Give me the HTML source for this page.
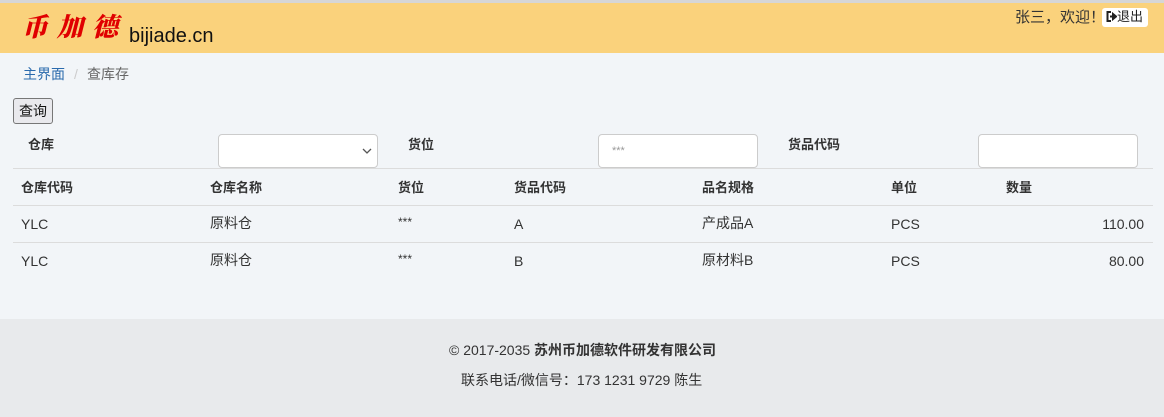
<!DOCTYPE html>
<html><head><meta charset="utf-8"><style>
*{box-sizing:border-box;margin:0;padding:0}
body{width:1164px;height:417px;overflow:hidden;background:#f2f5f8;font-family:"Liberation Sans","Noto Sans CJK SC",sans-serif;font-size:14px;color:#333;position:relative}
.abs{position:absolute;white-space:nowrap;line-height:18px}
.hdr{position:absolute;left:0;top:0;width:1164px;height:53px;background:#fad27c;border-top:3px solid #d6d6d6}
.logo{left:22px;top:10px;font-family:"Noto Serif CJK SC",serif;font-weight:900;font-size:26px;line-height:32px;color:#e00000;letter-spacing:9px;font-style:italic}
.dom{left:129px;top:24px;font-size:20px;line-height:24px;color:#111}
.b{font-weight:bold}
.line{position:absolute;left:13px;width:1140px;height:1px;background:#dcdcdc}
.inp{position:absolute;background:#fff;border:1px solid #ccc;border-radius:4px;height:34px}
.foot{position:absolute;left:0;top:319px;width:1164px;height:98px;background:#e8eaec}
.c{margin-top:0}
</style></head><body>
<div class="hdr"></div>
<div class="abs logo">币加德</div>
<div class="abs dom">bijiade.cn</div>
<div class="abs" style="left:1015px;top:9px;font-size:15px;color:#333">张三，欢迎！</div>
<div class="abs" style="left:1102px;top:8px;width:46px;height:19px;background:#fff;border-radius:3px;font-size:13px;color:#222;padding:0 0 0 4px"><svg width="11" height="11" viewBox="0 0 11 11" style="vertical-align:-1px"><path d="M5 1H1.5v9H5" fill="none" stroke="#222" stroke-width="2"/><path d="M4 5.5h4M7 3l3 2.5-3 2.5z" stroke="#222" stroke-width="2" fill="#222"/></svg>退出</div>
<div class="abs" style="left:23px;top:65px;color:#2a6aad">主界面</div>
<div class="abs" style="left:74px;top:65px;color:#ccc">/</div>
<div class="abs" style="left:87px;top:65px;color:#666">查库存</div>
<div class="abs" style="left:13px;top:98px;width:40px;height:26px;border:1px solid #777;border-radius:3px;background:#e9e9ed;font-size:14px;padding:3px 0 0 5px;color:#111">查询</div>
<div class="abs b" style="left:28px;top:136px;font-size:13px">仓库</div>
<div class="inp" style="left:218px;top:134px;width:160px"><svg style="position:absolute;right:5px;top:13px" width="10" height="7"><path d="M1 1l4 4 4-4" fill="none" stroke="#555" stroke-width="1.3"/></svg></div>
<div class="abs b" style="left:408px;top:136px;font-size:13px">货位</div>
<div class="inp" style="left:598px;top:134px;width:160px"><span style="position:absolute;left:13px;top:10px;font-size:11px;color:#999">***</span></div>
<div class="abs b" style="left:788px;top:136px;font-size:13px">货品代码</div>
<div class="inp" style="left:978px;top:134px;width:160px"></div>
<div class="line" style="top:168px"></div>
<div class="line" style="top:205px"></div>
<div class="line" style="top:242px"></div>
<div class="abs b" style="left:21px;top:179px;font-size:13px">仓库代码</div>
<div class="abs b" style="left:210px;top:179px;font-size:13px">仓库名称</div>
<div class="abs b" style="left:398px;top:179px;font-size:13px">货位</div>
<div class="abs b" style="left:514px;top:179px;font-size:13px">货品代码</div>
<div class="abs b" style="left:702px;top:179px;font-size:13px">品名规格</div>
<div class="abs b" style="left:891px;top:179px;font-size:13px">单位</div>
<div class="abs b" style="left:1006px;top:179px;font-size:13px">数量</div>
<div class="abs" style="left:21px;top:215px">YLC</div><div class="abs c" style="left:210px;top:214px">原料仓</div><div class="abs" style="left:398px;top:213px;font-size:12px">***</div><div class="abs" style="left:514px;top:215px">A</div><div class="abs c" style="left:702px;top:214px">产成品A</div><div class="abs" style="left:891px;top:215px">PCS</div><div class="abs" style="right:20px;top:215px">110.00</div>
<div class="abs" style="left:21px;top:252px">YLC</div><div class="abs c" style="left:210px;top:251px">原料仓</div><div class="abs" style="left:398px;top:250px;font-size:12px">***</div><div class="abs" style="left:514px;top:252px">B</div><div class="abs c" style="left:702px;top:251px">原材料B</div><div class="abs" style="left:891px;top:252px">PCS</div><div class="abs" style="right:20px;top:252px">80.00</div>
<div class="foot"></div>
<div class="abs" style="left:449px;top:341px">© 2017-2035 <b>苏州币加德软件研发有限公司</b></div>
<div class="abs" style="left:461px;top:371px">联系电话/微信号：173 1231 9729 陈生</div>
</body></html>
